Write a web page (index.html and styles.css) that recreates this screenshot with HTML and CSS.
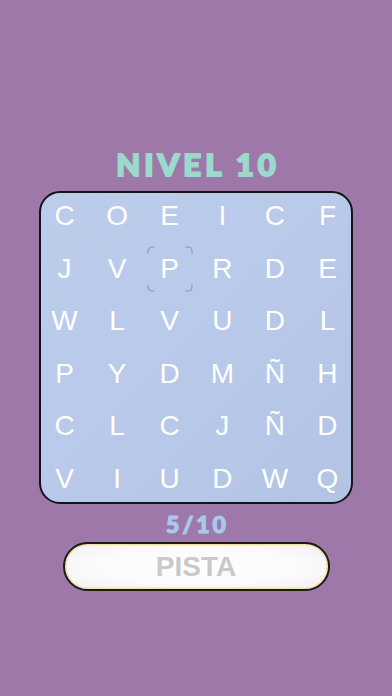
FILE: index.html
```html
<!DOCTYPE html>
<html lang="es">
<head>
<meta charset="utf-8">
<title>Nivel 10</title>
<link rel="stylesheet" href="styles.css">
</head>
<body>
<main class="screen">
  <h1 class="title">NIVEL 10</h1>
  <section class="board">
    <div class="grid">
      <span class="cell">C</span><span class="cell">O</span><span class="cell">E</span><span class="cell">I</span><span class="cell">C</span><span class="cell">F</span>
      <span class="cell">J</span><span class="cell">V</span><span class="cell selected">P<svg class="brackets" viewBox="0 0 46 46" width="46" height="46"><path d="M1 7 V5 A4 4 0 0 1 5 1 H7 M39 1 H41 A4 4 0 0 1 45 5 V7 M45 39 V41 A4 4 0 0 1 41 45 H39 M7 45 H5 A4 4 0 0 1 1 41 V39" fill="none" stroke="#7f9dc2" stroke-width="1.2" stroke-linecap="round"/></svg></span><span class="cell">R</span><span class="cell">D</span><span class="cell">E</span>
      <span class="cell">W</span><span class="cell">L</span><span class="cell">V</span><span class="cell">U</span><span class="cell">D</span><span class="cell">L</span>
      <span class="cell">P</span><span class="cell">Y</span><span class="cell">D</span><span class="cell">M</span><span class="cell">Ñ</span><span class="cell">H</span>
      <span class="cell">C</span><span class="cell">L</span><span class="cell">C</span><span class="cell">J</span><span class="cell">Ñ</span><span class="cell">D</span>
      <span class="cell">V</span><span class="cell">I</span><span class="cell">U</span><span class="cell">D</span><span class="cell">W</span><span class="cell">Q</span>
    </div>
  </section>
  <p class="progress">5/10</p>
  <button class="hint" type="button">PISTA</button>
</main>
</body>
</html>
```
FILE: styles.css
```css
html, body {
  margin: 0;
  padding: 0;
  background: #9d78a8;
}
body {
  width: 392px;
  height: 696px;
  overflow: hidden;
}
.screen {
  display: flex;
  flex-direction: column;
  align-items: center;
  padding-top: 149px;
}
.title {
  margin: 0;
  height: 30px;
  line-height: 30px;
  font-family: "Lato", "DejaVu Sans", sans-serif;
  font-weight: 900;
  font-size: 31px;
  letter-spacing: 4px;
  color: #9bd9cc;
  -webkit-text-stroke: 2px #9bd9cc;
  padding-left: 4px;
}
.board {
  margin-top: 12px;
  width: 314px;
  height: 313px;
  box-sizing: border-box;
  border: 2px solid #141414;
  border-radius: 21px;
  background: linear-gradient(135deg, #bccdec 0%, #b8c9e9 50%, #b3c3e3 100%);
  display: flex;
  align-items: center;
  justify-content: center;
}
.grid {
  display: grid;
  grid-template-columns: repeat(6, 52.6px);
  grid-template-rows: repeat(6, 52.5px);
  justify-content: center;
  align-content: center;
  flex-shrink: 0;
}
.cell {
  position: relative;
  display: flex;
  align-items: center;
  justify-content: center;
  font-family: "Liberation Sans", Arial, sans-serif;
  font-size: 28px;
  color: #ffffff;
  line-height: 1;
}
.brackets {
  position: absolute;
  left: 50%;
  top: 50%;
  margin-left: -23px;
  margin-top: -23px;
}
.progress {
  margin: 10px 0 0;
  height: 20px;
  line-height: 20px;
  font-family: "Lato", "DejaVu Sans", sans-serif;
  font-weight: 900;
  font-size: 23px;
  letter-spacing: 3px;
  padding-left: 3px;
  color: #a7c9ee;
  -webkit-text-stroke: 1.2px #a7c9ee;
}
.hint {
  margin-top: 8px;
  width: 267px;
  height: 49px;
  box-sizing: border-box;
  border: 2px solid #1c1a14;
  border-radius: 25px;
  box-shadow: inset 0 0 0 1.5px #efe3a6;
  background: radial-gradient(ellipse at 50% 50%, #ffffff 0%, #fbfafc 55%, #f1eff3 100%);
  font-family: "Liberation Sans", Arial, sans-serif;
  font-weight: 700;
  font-size: 28px;
  color: #c9c9c9;
  padding: 0;
  line-height: 45px;
}
```
